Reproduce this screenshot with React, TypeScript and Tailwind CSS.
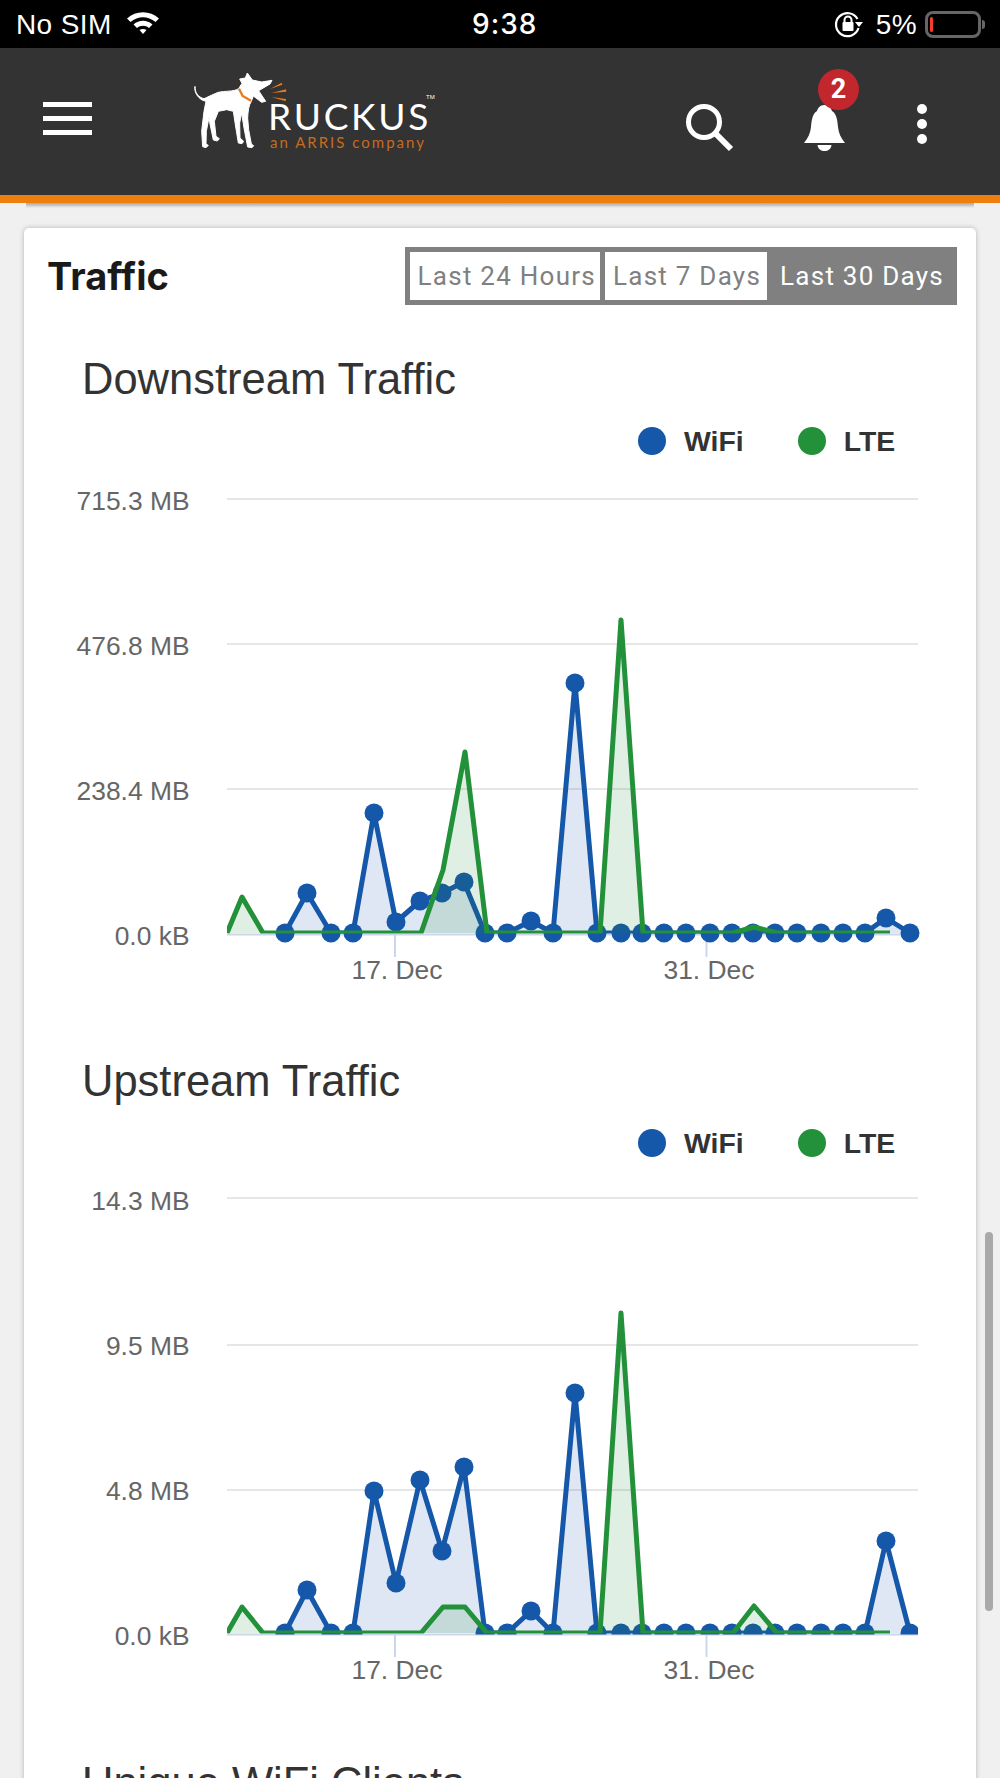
import { useId } from "react";

const sans = "font-['Liberation_Sans',Arial,sans-serif]";
const roboto = "font-['Roboto',Arial,sans-serif]";
const inter = "font-['Inter',Arial,sans-serif]";

const xs = [285, 307, 331, 353, 374, 396, 420, 442, 464, 485, 507, 531, 553, 575, 597, 621, 642, 664, 686, 710, 732, 753, 775, 797, 821, 843, 865, 886, 910];

const downWifi = [0, 40, 0, 0, 120, 11, 32, 40, 51, 0, 0, 12, 0, 250, 0, 0, 0, 0, 0, 0, 0, 0, 0, 0, 0, 0, 0, 15, 0];
const upWifi = [0, 43, 0, 0, 142, 50, 153, 82, 166, 0, 0, 22, 0, 240, 0, 0, 0, 0, 0, 0, 0, 0, 0, 0, 0, 0, 0, 92, 0];

const downLte = [[227, 0], [242, 36], [263, 0], [421, 0], [443, 63], [465, 181], [487, 0], [600, 0], [621, 313], [643, 0], [733, 0], [754, 6], [777, 0], [890, 0]];
const upLte = [[227, 0], [242, 26], [263, 0], [421, 0], [443, 26], [465, 26], [487, 0], [600, 0], [621, 320], [643, 0], [733, 0], [754, 27], [777, 0], [890, 0]];

const BLUE = "#1557a9";
const GREEN = "#23913a";

type ChartProps = {
  title: string;
  labels: string[];
  wifi: number[];
  lte: number[][];
  baseline: number;
  grid: number[];
  svgTop: number;
  svgHeight: number;
  clipMarkers?: boolean;
};

const Chart = ({ title, labels, wifi, lte, baseline, grid, svgTop, svgHeight, clipMarkers }: ChartProps) => {
  const id = useId().replace(/:/g, "");
  const wifiPts = xs.map((x, i) => `${x},${baseline - wifi[i]}`).join(" ");
  const ltePts = lte.map(([x, h]) => `${x},${baseline - h}`).join(" ");

  return (
    <section className="h-[702px]">
      <h3 className={`pl-[58px] text-[43.5px] leading-[50px] text-[#333333] ${sans}`}>{title}</h3>
      <div className={`mt-3 flex h-[50px] items-center pl-[614px] text-[28.4px] font-bold text-[#333333] ${sans}`}>
        <span className="h-7 w-7 rounded-full bg-[#1557a9]" />
        <span className="ml-[18px]">WiFi</span>
        <span className="ml-[54px] h-7 w-7 rounded-full bg-[#23913a]" />
        <span className="ml-[18px]">LTE</span>
      </div>
      <svg width={951} height={svgHeight} viewBox={`24 ${svgTop} 951 ${svgHeight}`} className="block">
        <defs>
          <clipPath id={`${id}-plot`}>
            <rect x={227} y={svgTop} width={691} height={baseline + 1.5 - svgTop} />
          </clipPath>
          <clipPath id={`${id}-line`}>
            <rect x={227} y={svgTop} width={691} height={baseline + 0.4 - svgTop} />
          </clipPath>
        </defs>
        {grid.map((y) => (
          <line key={y} x1={227} x2={918} y1={y} y2={y} stroke="#e6e6e6" strokeWidth={2} />
        ))}
        <line x1={227} x2={918} y1={baseline + 1.5} y2={baseline + 1.5} stroke="#ccd6eb" strokeWidth={2} />
        <line x1={395} x2={395} y1={baseline + 2} y2={baseline + 24} stroke="#ccd6eb" strokeWidth={2} />
        <line x1={706.5} x2={706.5} y1={baseline + 2} y2={baseline + 24} stroke="#ccd6eb" strokeWidth={2} />

        <polygon points={`285,${baseline} ${wifiPts} 910,${baseline}`} fill={BLUE} fillOpacity={0.14} clipPath={`url(#${id}-plot)`} />
        <polyline points={wifiPts} fill="none" stroke={BLUE} strokeWidth={5} strokeLinejoin="round" clipPath={`url(#${id}-line)`} />
        <g clipPath={clipMarkers ? `url(#${id}-plot)` : undefined}>
          {xs.map((x, i) => (
            <circle key={x} cx={x} cy={baseline - wifi[i]} r={9.5} fill={BLUE} />
          ))}
        </g>
        <polygon points={`227,${baseline} ${ltePts}`} fill={GREEN} fillOpacity={0.14} clipPath={`url(#${id}-plot)`} />
        <polyline points={ltePts} fill="none" stroke={GREEN} strokeWidth={5} strokeLinejoin="round" clipPath={`url(#${id}-line)`} />

        <g fill="#666666" fontSize={26.4} fontFamily="'Liberation Sans', Arial, sans-serif">
          {labels.map((label, i) => (
            <text key={label} x={189.5} y={baseline - 145 * (3 - i) + 12} textAnchor="end">
              {label}
            </text>
          ))}
          <text x={397} y={baseline + 46} textAnchor="middle">17. Dec</text>
          <text x={709} y={baseline + 46} textAnchor="middle">31. Dec</text>
        </g>
      </svg>
    </section>
  );
};

const StatusBar = () => (
  <div className={`flex h-12 items-center bg-black text-[28px] tracking-[0.4px] text-white ${sans}`}>
    <span className="ml-4 pt-[2px]">No SIM</span>
    <svg width="34" height="24" viewBox="0 0 34 24" className="mb-1 ml-[14px] shrink-0">
      <path d="M1 8.5 C10 0 24 0 33 8.5 L29.5 12 C22 5.5 12 5.5 4.5 12 Z" fill="#fff" />
      <path d="M7.5 14.5 C13 9.5 21 9.5 26.5 14.5 L23 18 C19.5 15 14.5 15 11 18 Z" fill="#fff" />
      <path d="M13.5 20 C15.5 18.5 18.5 18.5 20.5 20 L17 24 Z" fill="#fff" />
    </svg>
    <span className={`ml-[312px] w-[66px] whitespace-nowrap text-center font-medium tracking-[1px] ${inter}`}>9:38</span>
    <svg width="30" height="30" viewBox="0 0 30 30" className="ml-[295px] shrink-0">
      <path d="M24.5 10 A11.5 11.5 0 1 0 25.5 19" fill="none" stroke="#fff" strokeWidth="2.2" />
      <path d="M22 13 L30 13 L26 18 Z" fill="#fff" />
      <rect x="9.5" y="13" width="11" height="9" rx="1" fill="#fff" />
      <path d="M11.5 13 V11 A3.5 3.5 0 0 1 18.5 11 V13" fill="none" stroke="#fff" strokeWidth="2" />
    </svg>
    <span className="ml-[13px] pt-[2px]">5%</span>
    <div className="relative ml-[8px] h-[27px] w-[56px] rounded-[8px] border-[3px] border-[#666666]">
      <div className="ml-[2px] mt-[3px] h-[15px] w-[3px] rounded-sm bg-[#ff3b30]" />
      <div className="absolute -right-[7px] top-[6px] h-[9px] w-[3px] rounded-r-sm bg-[#666666]" />
    </div>
  </div>
);

const Logo = () => (
  <div className="relative ml-[98px] h-[100px] w-[250px]">
    <svg width="100" height="90" viewBox="0 0 300 270" className="absolute left-0 top-[20px]">
      <path
        d="M15 55 C14 72 24 88 42 92 C52 88 62 82 85 73 C105 68 130 72 146 62 L156 46 L149 33 L166 30 L172 15 L187 36 L215 42 L246 37 L240 48 L206 68 L227 100 L215 103 L190 84 L184 100 C176 112 174 130 173 150 L176 185 L184 228 L191 233 L186 239 L173 237 L162 180 L155 135 L149 165 L150 210 L161 220 L156 227 L145 225 L136 170 L130 130 L110 125 L85 130 L73 160 L78 205 L88 212 L82 219 L70 216 L60 168 L57 148 L49 190 L48 228 L55 232 L48 239 L38 236 L35 190 L42 130 L48 100 L38 97 C22 88 12 72 15 55 Z"
        fill="#fff"
        stroke="#fff"
        strokeWidth="3"
        strokeLinejoin="round"
      />
      <path d="M147 62 L158 84 L183 98" fill="none" stroke="#e8791c" strokeWidth="7" />
      <path d="M240 63 L275 44 L277 50 Z M244 75 L288 64 L289 71 Z M244 87 L288 93 L287 100 Z" fill="#e8791c" />
    </svg>
    <span className="absolute left-[78px] top-[53px] font-['Lato',Arial,sans-serif] text-[37px] leading-[30px] tracking-[2.7px] text-white">RUCKUS</span>
    <span className={`absolute left-[236px] top-[46px] text-[6px] leading-[6px] text-white ${sans}`}>TM</span>
    <span className="absolute left-[80px] top-[85px] whitespace-nowrap font-['Lato',Arial,sans-serif] text-[15px] leading-[18px] tracking-[2px] text-[#c96a1e]">an ARRIS company</span>
  </div>
);

const Header = () => (
  <>
    <header className="flex h-[147px] items-start bg-[#333333]">
      <div className="ml-[43px] mt-[54px] flex w-[49px] flex-col gap-[9px]">
        <div className="h-[5px] bg-white" />
        <div className="h-[5px] bg-white" />
        <div className="h-[5px] bg-white" />
      </div>
      <Logo />
      <svg width="52" height="52" viewBox="0 0 52 52" className="ml-[244px] mt-[54px]">
        <circle cx="20" cy="20" r="15.5" fill="none" stroke="#fff" strokeWidth="5" />
        <path d="M31 31 L47 47" stroke="#fff" strokeWidth="6" />
      </svg>
      <div className="relative ml-[68px] mt-[57px] h-[46px] w-[41px]">
        <svg width="41" height="46" viewBox="0 0 41 46">
          <path d="M20.5 0 C25 0 27 3 28 6 C33 9 33.5 17 34 22 C34.5 28 37 33 41 38 H0 C4 33 6.5 28 7 22 C7.5 17 8 9 13 6 C14 3 16 0 20.5 0 Z" fill="#fff" />
          <path d="M13.5 40 H27.5 C27 44 24 46 20.5 46 C17 46 14 44 13.5 40 Z" fill="#fff" />
        </svg>
        <div className={`absolute -right-[14px] -top-[36px] flex h-[41px] w-[41px] items-center justify-center rounded-full bg-[#c1272d] text-[27px] font-bold text-white ${roboto}`}>2</div>
      </div>
      <div className="ml-[72px] mt-[56px] flex flex-col gap-[5px]">
        <div className="h-[10px] w-[10px] rounded-full bg-white" />
        <div className="h-[10px] w-[10px] rounded-full bg-white" />
        <div className="h-[10px] w-[10px] rounded-full bg-white" />
      </div>
    </header>
    <div className="h-2 bg-[#ee7e0d]" />
    <div className="mx-[26px] h-[5px] bg-gradient-to-b from-[#a8a8a8] to-[#f0f0f0]" />
  </>
);

const RangeButtons = () => (
  <div className={`flex h-[58px] border-[5px] border-[#808080] bg-[#808080] text-[26px] tracking-[1.25px] ${roboto}`}>
    <div className="mr-[5px] flex h-full items-center bg-white pl-2 pr-[4px] text-[#808080]">Last 24 Hours</div>
    <div className="flex h-full items-center bg-white pl-2 pr-[6px] text-[#808080]">Last 7 Days</div>
    <div className="flex h-full items-center pl-[13px] pr-2 text-white">Last 30 Days</div>
  </div>
);

export default function App() {
  return (
    <div className="relative h-[1778px] w-[1000px] overflow-hidden bg-[#f0f0f0]">
      <StatusBar />
      <Header />
      <main className="mx-[24px] mt-5 h-[1600px] rounded-[5px] bg-white shadow-[0_0_5px_rgba(0,0,0,0.25)]">
        <div className="flex items-start justify-between pl-[23px] pr-[19px] pt-[19px]">
          <h2 className={`text-[38px] font-bold leading-[58px] text-[#1a1a1a] ${inter}`}>Traffic</h2>
          <RangeButtons />
        </div>
        <div className="mt-[49px]">
          <Chart
            title="Downstream Traffic"
            labels={["715.3 MB", "476.8 MB", "238.4 MB", "0.0 kB"]}
            wifi={downWifi}
            lte={downLte}
            baseline={933}
            grid={[499, 644, 789]}
            svgTop={466}
            svgHeight={590}
          />
          <Chart
            title="Upstream Traffic"
            labels={["14.3 MB", "9.5 MB", "4.8 MB", "0.0 kB"]}
            wifi={upWifi}
            lte={upLte}
            baseline={1633}
            grid={[1198, 1345, 1490]}
            svgTop={1168}
            svgHeight={590}
            clipMarkers
          />
          <h3 className={`pl-[58px] text-[43.5px] leading-[50px] text-[#333333] ${sans}`}>Unique WiFi Clients</h3>
        </div>
      </main>
      {/* overlay scrollbar */}
      <div className="absolute left-[985px] top-[1232px] h-[379px] w-2 rounded bg-[#a9a9a9]" />
    </div>
  );
}
